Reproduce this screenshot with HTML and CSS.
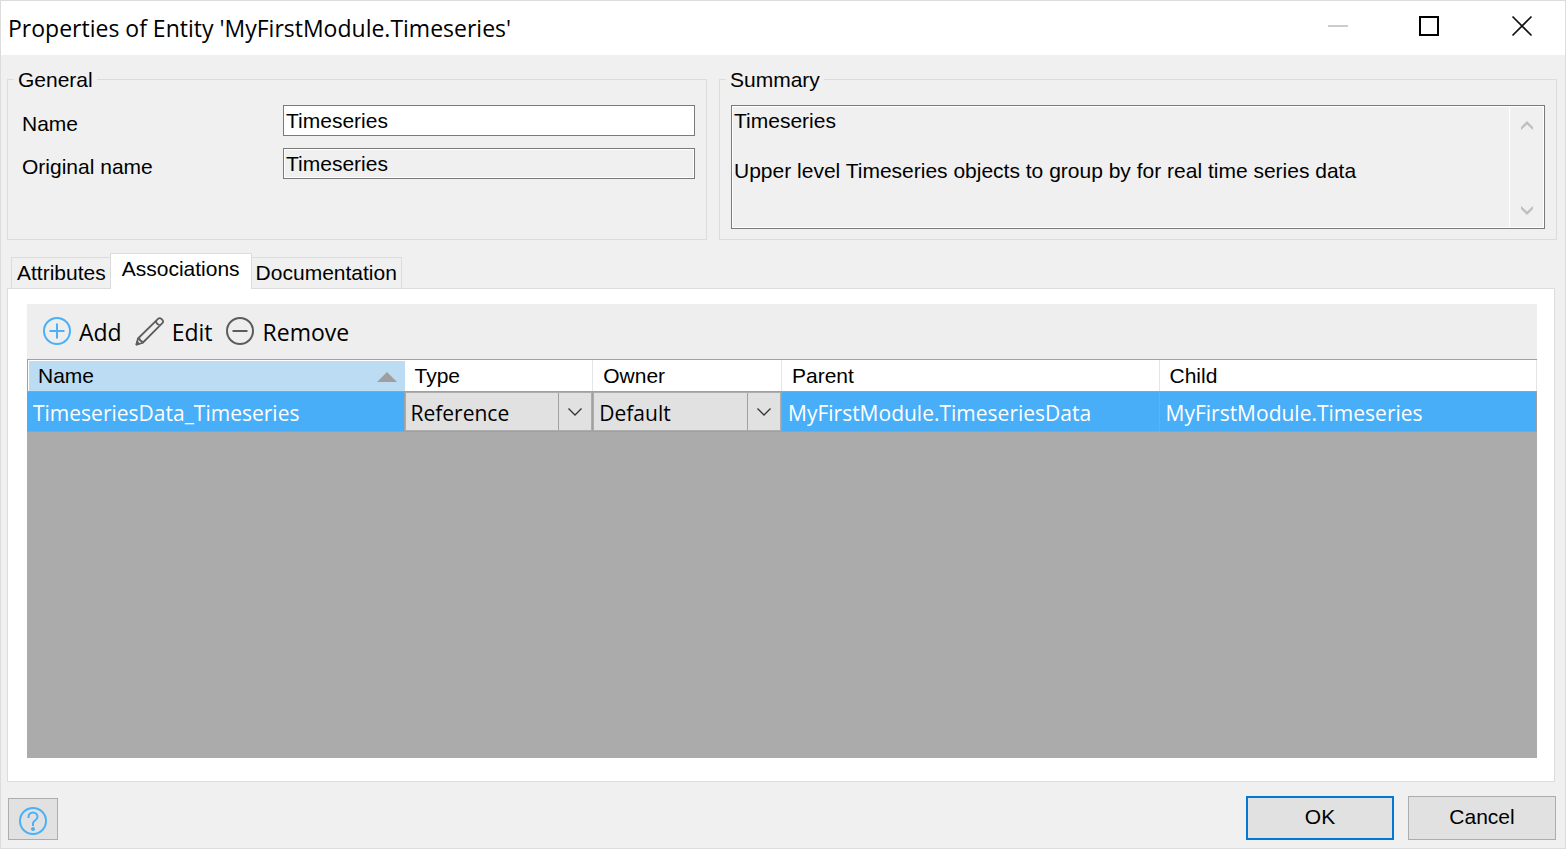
FILE: index.html
```html
<!DOCTYPE html>
<html lang="en">
<head>
<meta charset="utf-8">
<title>Properties of Entity 'MyFirstModule.Timeseries'</title>
<link rel="stylesheet" href="styles.css">
</head>
<body>
<main class="dialog">
  <header class="titlebar">
    <h1 class="title">Properties of Entity 'MyFirstModule.Timeseries'</h1>
    <button class="caption" type="button" aria-label="Minimize" disabled>
      <svg width="22" height="22" viewBox="0 0 22 22"><path d="M1 11h20" stroke="#ccc" stroke-width="2"/></svg>
    </button>
    <button class="caption" type="button" aria-label="Maximize">
      <svg width="22" height="22" viewBox="0 0 22 22"><rect x="1" y="2" width="18" height="18" fill="none" stroke="#000" stroke-width="2"/></svg>
    </button>
    <button class="caption" type="button" aria-label="Close">
      <svg width="22" height="22" viewBox="0 0 22 22"><path d="M1.500 1.500l19 19M20.500 1.500l-19 19" stroke="#111" stroke-width="1.700"/></svg>
    </button>
  </header>

  <div class="groups">
    <fieldset class="group">
      <legend>General</legend>
      <div class="fields">
        <label for="name">Name</label>
        <input id="name" class="box" type="text" value="Timeseries">
        <label for="original">Original name</label>
        <input id="original" class="box readonly" type="text" value="Timeseries" readonly>
      </div>
    </fieldset>
    <fieldset class="group">
      <legend>Summary</legend>
      <div class="summary readonly">
        <textarea class="summary-text" aria-label="Summary" readonly>Timeseries

Upper level Timeseries objects to group by for real time series data</textarea>
        <div class="scroll">
          <svg width="12" height="9" viewBox="0 0 12 9"><path d="M0 6L6 0l6 6v3L6 3.500 0 9z" fill="#bfbfbf"/></svg>
          <svg width="12" height="9" viewBox="0 0 12 9"><path d="M0 0l6 5.500L12 0v3L6 9 0 3z" fill="#bfbfbf"/></svg>
        </div>
      </div>
    </fieldset>
  </div>

  <div class="tabs" role="tablist">
    <button class="tab" type="button" role="tab">Attributes</button>
    <button class="tab active" type="button" role="tab" aria-selected="true">Associations</button>
    <button class="tab" type="button" role="tab">Documentation</button>
  </div>

  <section class="panel">
    <div class="toolbar">
      <button class="tool" type="button">
        <svg width="30" height="30" viewBox="0 0 30 30" fill="none" stroke="#4ab0f8" stroke-width="2"><circle cx="15" cy="14" r="13"/><path d="M15 6.500v15M7.500 14h15"/></svg>
        Add
      </button>
      <button class="tool" type="button">
        <svg width="30" height="30" viewBox="0 0 30 30" fill="none" stroke="#5c5c5c" stroke-width="1.800" stroke-linejoin="round"><path d="M1.500 27.500L3 21.500 23 1.900q1.700-1.700 3.400 0l.9.900q1.700 1.700 0 3.400L7.500 26zM3 21.500q2 0 2.200 2.200q2.100.2 2.300 2.300M21 4q.4 3.700 4.300 4.200"/><path d="M1.500 27.500l.6-2.600 2 2z" fill="#5c5c5c"/></svg>
        Edit
      </button>
      <button class="tool" type="button">
        <svg width="30" height="30" viewBox="0 0 30 30" fill="none" stroke="#5c5c5c" stroke-width="2"><circle cx="14" cy="14" r="13"/><path d="M6.500 14h15"/></svg>
        Remove
      </button>
    </div>
    <div class="grid-area">
      <table class="grid">
        <colgroup><col class="wide"><col class="narrow"><col class="narrow"><col class="wide"><col class="wide"></colgroup>
        <thead>
          <tr>
            <th class="sorted" aria-sort="ascending"><div class="sort-head">Name <svg width="20" height="10" viewBox="0 0 20 10"><path d="M0 10L10 0l10 10z" fill="#9f9f9f"/></svg></div></th>
            <th>Type</th>
            <th>Owner</th>
            <th>Parent</th>
            <th>Child</th>
          </tr>
        </thead>
        <tbody>
          <tr>
            <td>TimeseriesData_Timeseries</td>
            <td class="cell-combo">
              <div class="combo">
                <select aria-label="Type"><option>Reference</option></select>
                <span class="arrow"><svg width="14" height="8" viewBox="0 0 14 8"><path d="M.5.5L7 7 13.500.5" fill="none" stroke="#333" stroke-width="1.300"/></svg></span>
              </div>
            </td>
            <td class="cell-combo">
              <div class="combo">
                <select aria-label="Owner"><option>Default</option></select>
                <span class="arrow"><svg width="14" height="8" viewBox="0 0 14 8"><path d="M.5.5L7 7 13.500.5" fill="none" stroke="#333" stroke-width="1.300"/></svg></span>
              </div>
            </td>
            <td>MyFirstModule.TimeseriesData</td>
            <td>MyFirstModule.Timeseries</td>
          </tr>
        </tbody>
      </table>
    </div>
  </section>

  <footer class="footer">
    <button class="help" type="button" aria-label="Help">
      <svg width="30" height="30" viewBox="0 0 30 30" fill="none" stroke="#4ab0f8" stroke-width="2"><circle cx="15" cy="15" r="13"/><path d="M10.500 12v-1a4.500 4.500 0 0 1 9 0c0 3.500-4.500 3-4.500 6.500v2.500"/><circle cx="15" cy="23" r="2" fill="#4ab0f8" stroke="none"/></svg>
    </button>
    <button class="action primary" type="button">OK</button>
    <button class="action" type="button">Cancel</button>
  </footer>
</main>
</body>
</html>
```
FILE: styles.css
```css
* {
  box-sizing: border-box;
}

body {
  margin: 0;
  font: 21px/25px "Liberation Sans", Arial, sans-serif;
  color: #000;
}

button,
input,
select,
textarea {
  margin: 0;
  font: inherit;
  color: inherit;
}

svg {
  display: block;
  flex: none;
}

.dialog {
  display: flex;
  flex-direction: column;
  min-height: 100vh;
  border: 1px solid #dcdcdc;
  background: #f0f0f0;
}

.titlebar {
  display: flex;
  align-items: center;
  height: 54px;
  padding-left: 7px;
  background: #fff;
}

.title {
  flex: 1;
  margin: 0;
  font: 400 23px/32px "Open Sans", "Segoe UI", sans-serif;
}

.caption {
  display: grid;
  place-items: center;
  width: 92px;
  height: 50px;
  padding: 0 0 4px;
  border: 0;
  background: none;
}

.caption:last-child {
  margin-right: -3px;
}

.groups {
  display: grid;
  grid-template-columns: 700fr 838fr;
  gap: 12px;
  padding: 12px 8px 0 6px;
}

.group {
  min-width: 0;
  min-height: 173px;
  margin: 0;
  padding: 13px 11px 10px;
  border: 1px solid #dcdcdc;
}

.group legend {
  margin-left: -5px;
  padding: 0 4px;
}

.fields {
  display: grid;
  grid-template-columns: 264px 1fr;
  row-gap: 12px;
  align-items: center;
}

.fields label {
  padding: 6px 0 0 3px;
}

.box {
  width: 100%;
  height: 31px;
  padding: 0 2px;
  border: 1px solid #7a7a7a;
  background: #fff;
}

.readonly {
  background: #f0f0f0;
  box-shadow: inset 0 0 0 1px #fff;
}

.summary {
  display: flex;
  height: 124px;
  border: 1px solid #7a7a7a;
}

.summary-text {
  flex: 1;
  padding: 2px;
  border: 0;
  background: none;
  resize: none;
  overflow: hidden;
}

.scroll {
  display: flex;
  flex-direction: column;
  justify-content: space-between;
  align-items: center;
  width: 35px;
  padding: 15px 0 13px;
  border-left: 1px solid #fff;
}

.tabs {
  position: relative;
  display: flex;
  align-items: flex-end;
  margin: 13px 0 -1px;
  padding-left: 10px;
}

.tab {
  height: 32px;
  padding: 0 4px 2px 5px;
  border: 1px solid #dcdcdc;
  background: #f0f0f0;
}

.tab.active {
  height: 36px;
  margin: 0 -1px;
  padding: 0 11px 6px;
  border-bottom: 0;
  background: #fff;
}

.tab:last-child {
  padding: 0 4px 2px;
}

.panel {
  display: flex;
  flex: 1;
  flex-direction: column;
  margin: 0 10px 0 6px;
  padding: 15px 17px 23px 19px;
  border: 1px solid #dcdcdc;
  background: #fff;
}

.toolbar {
  display: flex;
  gap: 13px;
  height: 55px;
  padding: 0 15px;
  background: #eee;
}

.tool {
  display: flex;
  align-items: center;
  gap: 7px;
  padding: 0;
  border: 0;
  background: none;
  font: 23px/32px "Open Sans", "Segoe UI", sans-serif;
}

.grid-area {
  flex: 1;
  background: #ababab;
}

.grid {
  width: 100%;
  border-collapse: separate;
  border-spacing: 0;
  table-layout: fixed;
}

.wide {
  width: 25%;
}

.narrow {
  width: 12.5%;
}

.grid th {
  height: 33px;
  padding: 0 10px;
  border: solid #a0a0a0;
  border-width: 1px 0;
  box-shadow: inset -1px 0 #e5e5e5;
  background: #fff;
  font-weight: 400;
  text-align: left;
}

.grid th.sorted {
  padding: 0 8px 0 10px;
  border-left-width: 1px;
  box-shadow: inset 1px 1px #fff;
  background: #bbdcf3;
}

.sort-head {
  display: flex;
  align-items: center;
  justify-content: space-between;
}

.sort-head svg {
  margin-top: 2px;
}

.grid td {
  height: 40px;
  padding: 3px 6px 0;
  border-right: 1px solid #a0a0a0;
  border-bottom: 1px solid #a0a0a0;
  background: #48aef8;
  color: #fff;
  font: 21px/30px "Open Sans", "Segoe UI", sans-serif;
}

.grid td.cell-combo {
  padding: 0;
  color: #000;
}

.combo {
  display: grid;
  grid-template-columns: 1fr 33px;
  height: 39px;
  border: 1px solid #adadad;
  background: #e1e1e1;
}

.combo select {
  grid-area: 1 / 1 / 2 / 3;
  width: 100%;
  padding: 2px 0 0 5px;
  border: 0;
  background: none;
  appearance: none;
}

.arrow {
  display: grid;
  grid-area: 1 / 2;
  place-items: center;
  border-left: 1px solid #a0a0a0;
  pointer-events: none;
}

.footer {
  display: flex;
  align-items: flex-end;
  gap: 14px;
  padding: 14px 9px 8px 7px;
}

.help {
  display: grid;
  place-items: center;
  width: 50px;
  height: 42px;
  margin-right: auto;
  padding: 4px 0 0;
  border: 1px solid #adadad;
  background: #e1e1e1;
}

.action {
  width: 148px;
  height: 44px;
  padding: 0 0 3px;
  border: 1px solid #adadad;
  background: #e1e1e1;
}

.action.primary {
  border: 2px solid #0078d7;
}
```
